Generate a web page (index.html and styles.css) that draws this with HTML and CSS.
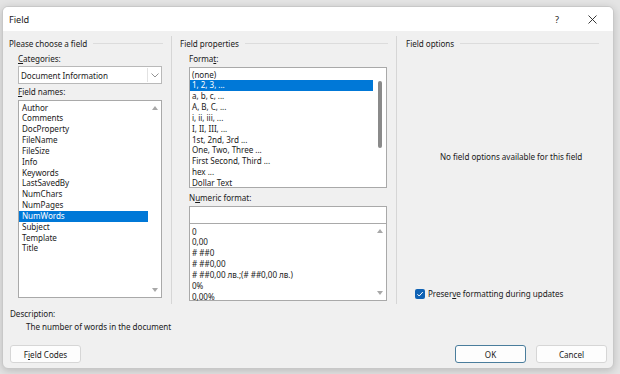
FILE: index.html
```html
<!DOCTYPE html>
<html>
<head>
  <title>Field</title>
  <link rel="stylesheet" href="styles.css">
</head>
<body>
  <div class="dialog">
    <div class="titlebar">
      <span class="title">Field</span>
      <span class="help">?</span>
      <svg class="close" width="9" height="9" viewBox="0 0 9 9"><path d="M0.5 0.5L8.5 8.5M8.5 0.5L0.5 8.5" stroke="#222" stroke-width="0.9" fill="none"/></svg>
    </div>
    <div class="content">
      <div class="columns">
        <div class="col col-left">
          <div class="group-head"><span>Please choose a field</span><i></i></div>
          <div class="inset">
            <div class="label"><u>C</u>ategories:</div>
            <div class="combo">
              <span class="combo-text">Document Information</span>
              <span class="combo-btn">
                <svg width="8" height="5" viewBox="0 0 8 5"><path d="M0.5 0.5L4 4L7.5 0.5" stroke="#777" stroke-width="0.8" fill="none"/></svg>
              </span>
            </div>
            <div class="label"><u>F</u>ield names:</div>
            <div class="listbox names">
              <div class="items">
                <div>Author</div>
                <div>Comments</div>
                <div>DocProperty</div>
                <div>FileName</div>
                <div>FileSize</div>
                <div>Info</div>
                <div>Keywords</div>
                <div>LastSavedBy</div>
                <div>NumChars</div>
                <div>NumPages</div>
                <div class="sel">NumWords</div>
                <div>Subject</div>
                <div>Template</div>
                <div>Title</div>
              </div>
              <div class="scroll">
                <span class="arrow up"></span>
                <span class="arrow down"></span>
              </div>
            </div>
          </div>
        </div>
        <div class="col col-mid">
          <div class="group-head"><span>Field properties</span><i></i></div>
          <div class="inset">
            <div class="label">Forma<u>t</u>:</div>
            <div class="listbox format">
              <div class="items">
                <div>(none)</div>
                <div class="sel">1, 2, 3, ...</div>
                <div>a, b, c, ...</div>
                <div>A, B, C, ...</div>
                <div>i, ii, iii, ...</div>
                <div>I, II, III, ...</div>
                <div>1st, 2nd, 3rd ...</div>
                <div>One, Two, Three ...</div>
                <div>First Second, Third ...</div>
                <div>hex ...</div>
                <div>Dollar Text</div>
              </div>
              <div class="scroll">
                <span class="thumb"></span>
              </div>
            </div>
            <div class="label numlabel">N<u>u</u>meric format:</div>
            <div class="textbox"></div>
            <div class="listbox numeric">
              <div class="items">
                <div>0</div>
                <div>0,00</div>
                <div># ##0</div>
                <div># ##0,00</div>
                <div># ##0,00 лв.;(# ##0,00 лв.)</div>
                <div>0%</div>
                <div>0,00%</div>
              </div>
              <div class="scroll">
                <span class="arrow up"></span>
                <span class="arrow down"></span>
              </div>
            </div>
          </div>
        </div>
        <div class="col col-right">
          <div class="group-head"><span>Field options</span><i></i></div>
          <div class="no-options">No field options available for this field</div>
          <label class="check">
            <span class="box">
              <svg width="8" height="8" viewBox="0 0 8 8"><path d="M1.4 4.2L3.2 6L6.8 2" stroke="#fff" stroke-width="1" fill="none"/></svg>
            </span>
            Preser<u>v</u>e formatting during updates
          </label>
        </div>
      </div>
      <div class="description">
        <div>Description:</div>
        <div class="desc-text">The number of words in the document</div>
      </div>
      <div class="buttons">
        <button class="btn">F<u>i</u>eld Codes</button>
        <span class="spacer"></span>
        <button class="btn default">OK</button>
        <button class="btn">Cancel</button>
      </div>
    </div>
  </div>
</body>
</html>
```

FILE: styles.css
```css
body {
  margin: 0;
  background: #e4e4e4;
  font-family: "Noto Sans", sans-serif;
  font-size: 8.1px;
  letter-spacing: -0.04px;
  color: #1b1b1b;
  height: 374px;
  overflow: hidden;
}
u {
  text-decoration-thickness: 0.6px;
  text-underline-offset: 1px;
}
.dialog {
  margin: 6px 0 0 2px;
  width: 612px;
  height: 363px;
  background: #f0f0f0;
  border: 1px solid #c8c8c8;
  border-radius: 6px;
  box-sizing: border-box;
  box-shadow: 0 2px 8px rgba(0, 0, 0, 0.18);
  overflow: hidden;
}
.titlebar {
  height: 24px;
  background: #fff;
  display: flex;
  align-items: center;
  padding-left: 6px;
}
.title {
  font-size: 9.2px;
  flex: 1;
}
.help {
  font-size: 9.2px;
  margin-right: 29px;
}
.close {
  margin-right: 16px;
}
.content {
  padding: 5px 6px 0 6px;
}
.columns {
  display: flex;
  height: 268px;
}
.col {
  display: flex;
  flex-direction: column;
}
.col-left {
  width: 162px;
  border-right: 1px solid #d6d6d6;
}
.col-mid {
  width: 216px;
  padding-left: 8px;
  border-right: 1px solid #d6d6d6;
}
.col-right {
  flex: 1;
  padding-left: 9px;
}
.group-head {
  display: flex;
  align-items: center;
  height: 14px;
  padding-right: 8px;
}
.group-head i {
  flex: 1;
  border-top: 1px solid #dcdcdc;
  margin-left: 6px;
}
.inset {
  padding-left: 9px;
  padding-right: 9px;
  display: flex;
  flex-direction: column;
}
.label {
  height: 14px;
  line-height: 14px;
  margin-top: 1px;
}
.inset > .label:first-child {
  margin-top: 2px;
}
.combo {
  height: 18px;
  background: #fff;
  border: 1px solid #b9b9b9;
  box-sizing: border-box;
  display: flex;
  align-items: center;
}
.combo-text {
  flex: 1;
  padding-left: 2px;
}
.combo-btn {
  width: 13px;
  height: 14px;
  border-left: 1px solid #e2e2e2;
  display: flex;
  align-items: center;
  justify-content: center;
}
.listbox {
  background: #fff;
  border: 1px solid #a9a9a9;
  box-sizing: border-box;
  display: flex;
  margin-top: 1px;
}
.items {
  flex: 1;
  line-height: 10.85px;
}
.items div {
  padding-left: 3px;
  white-space: nowrap;
}
.items .sel {
  background: #0078d7;
  color: #fff;
}
.scroll {
  width: 13px;
  display: flex;
  flex-direction: column;
  align-items: center;
  justify-content: space-between;
}
.arrow {
  width: 0;
  height: 0;
  border-left: 3.5px solid transparent;
  border-right: 3.5px solid transparent;
}
.arrow.up {
  border-bottom: 4px solid #a8a8a8;
  margin-top: 5px;
}
.arrow.down {
  border-top: 4px solid #a8a8a8;
  margin-bottom: 5px;
}
.names {
  height: 198px;
}
.names .items {
  padding-top: 1.5px;
}
.format {
  height: 121px;
}
.format .items {
  padding-top: 1.5px;
}
.format .items div {
  padding-left: 2px;
}
.format .scroll {
  justify-content: flex-start;
}
.thumb {
  width: 4px;
  height: 67px;
  margin-top: 13px;
  background: #8a8a8a;
  border-radius: 2px;
}
.numlabel {
  margin-top: 3px;
}
.textbox {
  height: 18px;
  background: #fff;
  border: 1px solid #a9a9a9;
  box-sizing: border-box;
  margin-top: 1px;
}
.numeric {
  height: 78px;
  margin-top: -1px;
}
.numeric .items {
  padding-top: 2.5px;
}
.numeric .items div {
  padding-left: 2px;
}
.no-options {
  margin-top: 101px;
  padding-left: 34px;
}
.check {
  display: flex;
  align-items: center;
  margin-top: 126px;
  padding-left: 9px;
}
.box {
  width: 10px;
  height: 10px;
  border-radius: 2px;
  background: #0f62b4;
  display: flex;
  align-items: center;
  justify-content: center;
  margin-right: 3px;
}
.description {
  padding-left: 1px;
  margin-top: 3px;
  line-height: 13px;
}
.desc-text {
  padding-left: 16px;
}
.buttons {
  display: flex;
  margin-top: 12px;
  gap: 10px;
}
.spacer {
  flex: 1;
}
.btn {
  font-family: "Noto Sans", sans-serif;
  font-size: 8.1px;
  color: #1b1b1b;
  width: 71px;
  height: 18px;
  background: #fdfdfd;
  border: 1px solid #d6d6d6;
  border-radius: 3px;
  padding: 0;
}
.btn:first-child {
  margin-left: 1px;
}
.btn.default {
  border-color: #4a7d9c;
}
```
